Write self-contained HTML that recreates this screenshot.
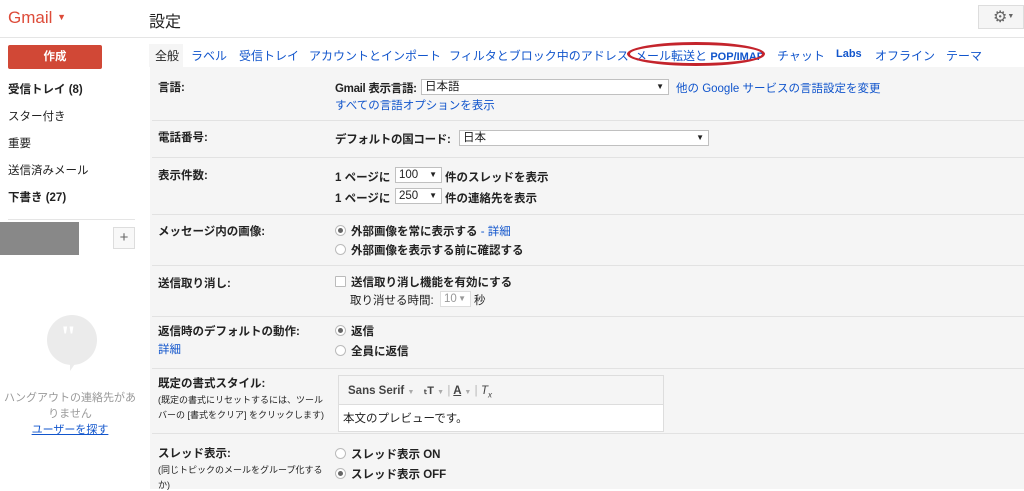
<html><head><style>
body{margin:0;width:1024px;height:489px;overflow:hidden;background:#fff;font-family:"Liberation Sans","Noto Sans CJK JP",sans-serif;font-size:11.5px;color:#222;position:relative}
.a{position:absolute;white-space:nowrap}
.b{font-weight:bold}
.l{color:#15c}
.sep{position:absolute;left:152px;right:0;height:1px;background:#e2e2e2}
.sel{position:absolute;background:#fff;border:1px solid #c0c0c0;height:14px;font-size:11.5px;line-height:14px;padding-left:3px;box-sizing:content-box}
.sel:after{content:"▼";position:absolute;right:4px;top:0;font-size:8px}
.r{display:inline-block;width:9px;height:9px;border:1px solid #bbb;border-radius:50%;background:#fff;margin-right:5px;vertical-align:-1px;position:relative}
.r.on:after{content:"";position:absolute;left:2px;top:2px;width:5px;height:5px;border-radius:50%;background:#666}
.tab{position:absolute;top:47px;color:#15c;font-size:12px}
.sm{font-size:9px}
</style></head><body>
<div class="a" style="left:8px;top:8px;font-size:17px;color:#dd4b39">Gmail <span style="font-size:9px;vertical-align:3px">▼</span></div>
<div class="a" style="left:149px;top:8px;font-size:16px;color:#222">設定</div>
<div class="a" style="left:978px;top:5px;width:46px;height:24px;background:#f5f5f5;border:1px solid #ddd;box-sizing:border-box;color:#666;font-size:16px;line-height:22px;padding-left:14px">⚙<span style="font-size:7px;vertical-align:4px">▼</span></div>
<div class="a" style="left:0;right:0;top:37px;height:1px;background:#e5e5e5"></div>
<div class="a" style="left:8px;top:45px;width:94px;height:24px;background:#d14836;color:#fff;font-weight:bold;text-align:center;line-height:24px;border-radius:2px">作成</div>
<div class="a b" style="left:8px;top:81px">受信トレイ (8)</div>
<div class="a" style="left:8px;top:108px">スター付き</div>
<div class="a" style="left:8px;top:135px">重要</div>
<div class="a" style="left:8px;top:162px">送信済みメール</div>
<div class="a b" style="left:8px;top:189px">下書き (27)</div>
<div class="a" style="left:8px;top:219px;width:127px;height:1px;background:#e5e5e5"></div>
<div class="a" style="left:0;top:222px;width:79px;height:33px;background:#888"></div>
<div class="a" style="left:113px;top:227px;width:22px;height:22px;border:1px solid #ddd;box-sizing:border-box;background:#f8f8f8;color:#666;text-align:center;line-height:20px;font-size:15px">+</div>
<div class="a" style="left:47px;top:315px;width:50px;height:50px;border-radius:50%;background:#ebebeb"></div>
<div class="a" style="left:70px;top:358px;width:0;height:0;border-left:9px solid #ebebeb;border-bottom:13px solid transparent"></div>
<div class="a" style="left:60px;top:320px;color:#fff;font-size:30px;font-weight:bold;font-family:'Liberation Serif',serif">"</div>
<div class="a" style="left:0;width:140px;top:390px;text-align:center;color:#999;line-height:16px;font-size:11px">ハングアウトの連絡先があ<br>りません<br><span style="color:#15c;text-decoration:underline">ユーザーを探す</span></div>

<div class="a" style="left:150px;top:67px;right:0;bottom:0;background:#f5f5f5"></div>
<div class="a" style="left:149px;top:44px;width:34px;height:23px;background:#f5f5f5"></div>
<div class="tab" style="left:155px;color:#222">全般</div>
<div class="tab" style="left:191px">ラベル</div>
<div class="tab" style="left:239px">受信トレイ</div>
<div class="tab" style="left:309px">アカウントとインポート</div>
<div class="tab" style="left:449px">フィルタとブロック中のアドレス</div>
<div class="tab" style="left:635px">メール転送と <b style="font-size:11px">POP/IMAP</b></div>
<div class="a" style="left:627px;top:42px;width:138px;height:24px;border:3px solid #c4242c;border-radius:50%;box-sizing:border-box"></div>
<div class="tab" style="left:777px">チャット</div>
<div class="tab b" style="left:836px;font-size:11px;top:48px">Labs</div>
<div class="tab" style="left:875px">オフライン</div>
<div class="tab" style="left:946px">テーマ</div>

<div class="a b" style="left:158px;top:79px">言語:</div>
<div class="a b" style="left:335px;top:80px;letter-spacing:-0.3px">Gmail 表示言語:</div>
<div class="sel" style="left:421px;top:79px;width:243px">日本語</div>
<div class="a l" style="left:676px;top:80px">他の Google サービスの言語設定を変更</div>
<div class="a l" style="left:335px;top:97px">すべての言語オプションを表示</div>
<div class="sep" style="top:120px"></div>
<div class="a b" style="left:158px;top:129px">電話番号:</div>
<div class="a b" style="left:335px;top:131px;letter-spacing:-0.3px">デフォルトの国コード:</div>
<div class="sel" style="left:459px;top:130px;width:245px">日本</div>
<div class="sep" style="top:157px"></div>
<div class="a b" style="left:158px;top:167px">表示件数:</div>
<div class="a b" style="left:335px;top:169px">1 ページに</div><div class="sel" style="left:395px;top:167px;width:42px">100</div><div class="a b" style="left:445px;top:169px">件のスレッドを表示</div>
<div class="a b" style="left:335px;top:190px">1 ページに</div><div class="sel" style="left:395px;top:188px;width:42px">250</div><div class="a b" style="left:445px;top:190px">件の連絡先を表示</div>
<div class="sep" style="top:214px"></div>
<div class="a b" style="left:158px;top:223px">メッセージ内の画像:</div>
<div class="a b" style="left:335px;top:223px"><span class="r on"></span>外部画像を常に表示する <span class="l" style="font-weight:normal">- 詳細</span></div>
<div class="a b" style="left:335px;top:242px"><span class="r"></span>外部画像を表示する前に確認する</div>
<div class="sep" style="top:265px"></div>
<div class="a b" style="left:158px;top:275px">送信取り消し:</div>
<div class="a b" style="left:335px;top:274px"><span class="r" style="border-radius:1px"></span>送信取り消し機能を有効にする</div>
<div class="a" style="left:350px;top:292px">取り消せる時間:</div><div class="sel" style="left:440px;top:291px;width:26px;color:#999;border-color:#ddd">10</div><div class="a" style="left:474px;top:292px">秒</div>
<div class="sep" style="top:316px"></div>
<div class="a b" style="left:158px;top:323px">返信時のデフォルトの動作:</div>
<div class="a l" style="left:158px;top:341px">詳細</div>
<div class="a b" style="left:335px;top:323px"><span class="r on"></span>返信</div>
<div class="a b" style="left:335px;top:343px"><span class="r"></span>全員に返信</div>
<div class="sep" style="top:368px"></div>
<div class="a b" style="left:158px;top:375px">既定の書式スタイル:</div>
<div class="a sm" style="left:158px;top:393px">(既定の書式にリセットするには、ツール</div>
<div class="a sm" style="left:158px;top:408px">バーの [書式をクリア] をクリックします)</div>
<div class="a" style="left:338px;top:375px;width:326px;height:57px;border:1px solid #ddd;background:#fff;box-sizing:border-box"></div>
<div class="a" style="left:339px;top:376px;width:324px;height:28px;background:#f5f5f5;border-bottom:1px solid #ddd"></div>
<div class="a b" style="left:348px;top:384px;color:#444">Sans Serif <span style="color:#aaa;font-size:7px">▼</span>&nbsp;&nbsp; <span style="font-size:11px">ₜT</span> <span style="color:#aaa;font-size:7px">▼</span> <span style="color:#ccc">|</span> <u>A</u> <span style="color:#aaa;font-size:7px">▼</span> <span style="color:#ccc">|</span> <i style="font-weight:normal">T<sub style="font-size:8px">x</sub></i></div>
<div class="a" style="left:343px;top:410px">本文のプレビューです。</div>
<div class="sep" style="top:433px"></div>
<div class="a b" style="left:158px;top:445px">スレッド表示:</div>
<div class="a sm" style="left:158px;top:463px">(同じトピックのメールをグループ化する</div>
<div class="a sm" style="left:158px;top:478px">か)</div>
<div class="a b" style="left:335px;top:446px"><span class="r"></span>スレッド表示 ON</div>
<div class="a b" style="left:335px;top:466px"><span class="r on"></span>スレッド表示 OFF</div>
</body></html>
